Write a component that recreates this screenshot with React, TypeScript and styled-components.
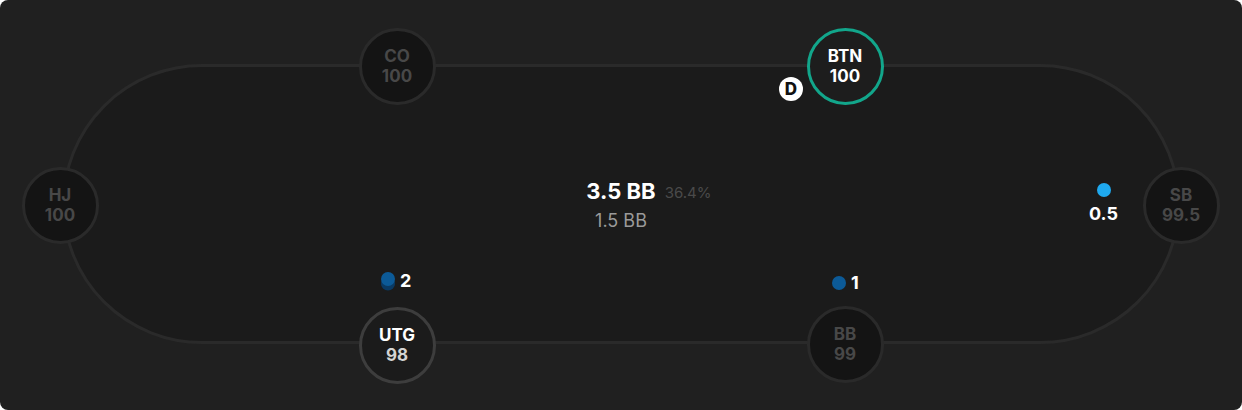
import React from 'react'
import styled, { createGlobalStyle, css } from 'styled-components'

const GlobalStyle = createGlobalStyle`
    html, body {
        margin: 0;
        padding: 0;
        background: #ffffff;
    }
    body {
        font-family: Inter, 'Noto Sans', 'Liberation Sans', sans-serif;
    }
`

const Frame = styled.div`
    position: relative;
    box-sizing: border-box;
    width: 1242px;
    height: 410px;
    padding: 64px 62px 66px;
    background: #202020;
    border-radius: 8px;
    overflow: hidden;
`

const Table = styled.div`
    box-sizing: border-box;
    width: 100%;
    height: 100%;
    border: 3px solid #2a2a2a;
    border-radius: 140px;
    background: #1b1b1b;
    display: flex;
    align-items: center;
    justify-content: center;
`

const Pot = styled.div`
    display: flex;
    flex-direction: column;
    align-items: center;
    gap: 6px;
    margin-top: 1px;
`

const PotMain = styled.div`
    position: relative;
    font-size: 22px;
    font-weight: 700;
    color: #ffffff;
    line-height: 26px;
`

const PotShare = styled.span`
    position: absolute;
    left: calc(100% + 9px);
    top: 2px;
    font-size: 15px;
    font-weight: 400;
    color: #4a4a4a;
    white-space: nowrap;
`

const PotSub = styled.div`
    font-size: 18px;
    font-weight: 400;
    color: #9a9a9a;
    line-height: 22px;
`

type SeatState = 'idle' | 'dealer' | 'hero'

const Seat = styled.div<{ $state: SeatState }>`
    position: absolute;
    box-sizing: border-box;
    width: 77px;
    height: 77px;
    margin: -38.5px 0 0 -38.5px;
    border-radius: 50%;
    border: 3px solid #2a2a2a;
    background: #141414;
    display: flex;
    flex-direction: column;
    align-items: center;
    justify-content: center;
    font-size: 17px;
    font-weight: 700;
    line-height: 20px;
    color: #484848;
    ${(p) =>
        p.$state === 'dealer' &&
        css`
            border-color: #12a68b;
            background: #1d1d1d;
            color: #ffffff;
        `}
    ${(p) =>
        p.$state === 'hero' &&
        css`
            border-color: #3d3d3d;
            background: #1b1b1b;
            color: #ffffff;
            span:last-child {
                color: #d4d4d4;
            }
        `}
`

const DealerButton = styled.div`
    position: absolute;
    left: 779px;
    top: 77px;
    width: 24px;
    height: 24px;
    border-radius: 50%;
    background: #ffffff;
    color: #111111;
    font-size: 17px;
    font-weight: 800;
    display: flex;
    align-items: center;
    justify-content: center;
`

const Bet = styled.div<{ $stacked?: boolean }>`
    position: absolute;
    display: flex;
    flex-direction: ${(p) => (p.$stacked ? 'column' : 'row')};
    align-items: center;
    gap: ${(p) => (p.$stacked ? '7px' : '5px')};
    font-size: 18px;
    font-weight: 700;
    color: #ffffff;
    line-height: 20px;
`

const Chip = styled.span<{ $color: string }>`
    display: block;
    width: 14px;
    height: 14px;
    border-radius: 50%;
    background: ${(p) => p.$color};
`

const ChipStack = () => (
    <svg width="14" height="19" viewBox="0 0 14 19">
        <ellipse cx="7" cy="12" rx="7" ry="6.5" fill="#0a3a63" />
        <circle cx="7" cy="7" r="7" fill="#0c5a97" />
    </svg>
)

const seats: { name: string; stack: string; x: number; y: number; state: SeatState }[] = [
    { name: 'CO', stack: '100', x: 397, y: 66, state: 'idle' },
    { name: 'BTN', stack: '100', x: 845, y: 66, state: 'dealer' },
    { name: 'HJ', stack: '100', x: 60, y: 205, state: 'idle' },
    { name: 'SB', stack: '99.5', x: 1181, y: 205, state: 'idle' },
    { name: 'UTG', stack: '98', x: 397, y: 345, state: 'hero' },
    { name: 'BB', stack: '99', x: 845, y: 344, state: 'idle' },
]

export default function App() {
    return (
        <>
            <GlobalStyle />
            <Frame>
                <Table>
                    <Pot>
                        <PotMain>
                            3.5 BB
                            <PotShare>36.4%</PotShare>
                        </PotMain>
                        <PotSub>1.5 BB</PotSub>
                    </Pot>
                </Table>
                {seats.map((s) => (
                    <Seat key={s.name} $state={s.state} style={{ left: s.x, top: s.y }}>
                        <span>{s.name}</span>
                        <span>{s.stack}</span>
                    </Seat>
                ))}
                <DealerButton>D</DealerButton>
                <Bet $stacked style={{ left: 1089, top: 183 }}>
                    <Chip $color="#1fa9ef" />
                    0.5
                </Bet>
                <Bet style={{ left: 381, top: 271 }}>
                    <ChipStack />
                    2
                </Bet>
                <Bet style={{ left: 832, top: 273 }}>
                    <Chip $color="#0c5a97" />1
                </Bet>
            </Frame>
        </>
    )
}
